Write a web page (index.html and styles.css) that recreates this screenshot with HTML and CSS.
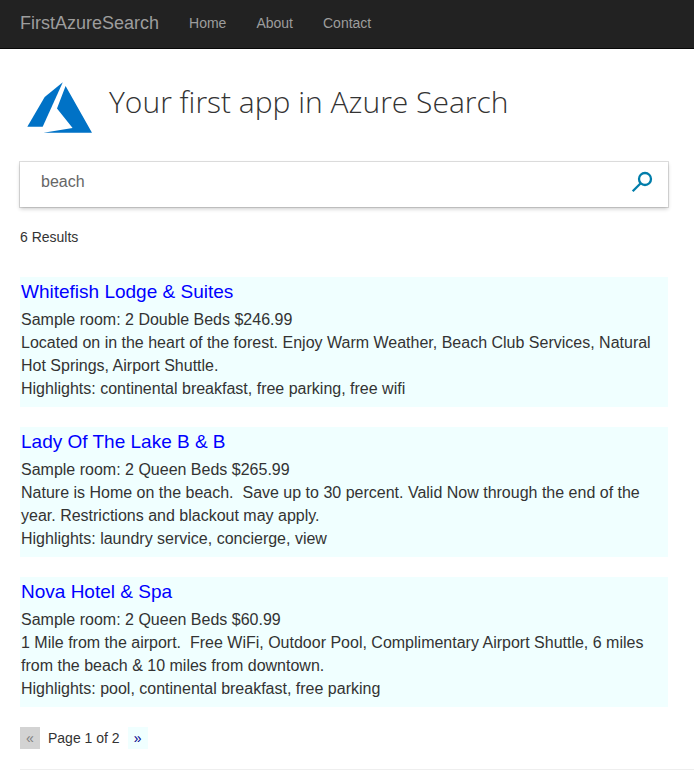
FILE: index.html
```html
<!DOCTYPE html>
<html lang="en">
<head>
<meta charset="utf-8">
<meta name="viewport" content="width=device-width, initial-scale=1">
<title>FirstAzureSearch</title>
<link rel="stylesheet" href="styles.css">
</head>
<body>
<header class="navbar">
  <a class="brand" href="#">FirstAzureSearch</a>
  <nav class="links">
    <a href="#">Home</a>
    <a href="#">About</a>
    <a href="#">Contact</a>
  </nav>
</header>
<main class="page">
  <div class="content">
    <div class="masthead">
      <svg class="logo" viewBox="0 0 66 52" aria-hidden="true">
        <path d="M35.800 0.300 17.700 15 0.300 44.700h15.400z"/>
        <path d="M38.600 4 30 26.500 45.600 46 16.500 50.700h48.500z"/>
      </svg>
      <h1 class="title">Your first app in Azure Search</h1>
    </div>
    <form class="search">
      <input class="search-input" type="text" value="beach" aria-label="Search text">
      <button class="search-button" type="button" aria-label="Search">
        <svg class="search-icon" viewBox="0 0 20 20" aria-hidden="true">
          <circle cx="13" cy="7" r="6"/>
          <path d="M8.700 11.300 0.700 19.300"/>
        </svg>
      </button>
    </form>
    <p class="count">6 Results</p>
    <section class="results">
      <article class="result">
        <h2 class="name">Whitefish Lodge &amp; Suites</h2>
        <p>Sample room: 2 Double Beds $246.99</p>
        <p>Located on in the heart of the forest. Enjoy Warm Weather, Beach Club Services, Natural Hot Springs, Airport Shuttle.</p>
        <p>Highlights: continental breakfast, free parking, free wifi</p>
      </article>
      <article class="result">
        <h2 class="name">Lady Of The Lake B &amp; B</h2>
        <p>Sample room: 2 Queen Beds $265.99</p>
        <p>Nature is Home on the beach.&nbsp; Save up to 30 percent. Valid Now through the end of the year. Restrictions and blackout may apply.</p>
        <p>Highlights: laundry service, concierge, view</p>
      </article>
      <article class="result">
        <h2 class="name">Nova Hotel &amp; Spa</h2>
        <p>Sample room: 2 Queen Beds $60.99</p>
        <p>1 Mile from the airport.&nbsp; Free WiFi, Outdoor Pool, Complimentary Airport Shuttle, 6 miles from the beach &amp; 10 miles from downtown.</p>
        <p>Highlights: pool, continental breakfast, free parking</p>
      </article>
    </section>
    <nav class="pager" aria-label="Pages">
      <button class="page-button" type="button" disabled aria-label="Previous page">«</button>
      <span>Page 1 of 2</span>
      <button class="page-button" type="button" aria-label="Next page">»</button>
    </nav>
  </div>
  <hr class="rule">
</main>
</body>
</html>
```
FILE: styles.css
```css
* {
  box-sizing: border-box;
}

body {
  margin: 0;
  background: #fff;
  color: #333;
  font: 14px/20px "Liberation Sans", Arial, sans-serif;
}

h1, h2, p {
  margin: 0;
}

.navbar {
  display: flex;
  align-items: center;
  gap: 30px;
  padding: 13px 20px 15px;
  background: #222;
  border-bottom: 1px solid #080808;
}

.navbar a {
  color: #9d9d9d;
  text-decoration: none;
}

.navbar .brand {
  font-size: 18px;
}

.links {
  display: flex;
  gap: 30px;
}

.page {
  padding-left: 20px;
}

.content {
  padding-right: 26px;
}

.masthead {
  display: flex;
  align-items: flex-start;
  gap: 16px;
  padding: 33px 0 28px 7px;
}

.logo {
  width: 66px;
  height: 52px;
  fill: #0072c6;
}

.title {
  font: 300 30px/40px "Open Sans", "Noto Sans", sans-serif;
}

.search {
  display: flex;
  height: 45px;
  background: #fff;
  box-shadow: 0 0 0 1px rgba(0, 0, 0, .12), 0 2px 4px rgba(0, 0, 0, .2);
}

.search-input {
  flex: 1;
  min-width: 0;
  padding: 0 0 6px 21px;
  border: 0;
  outline: 0;
  background: none;
  color: #666;
  font: 16px/20px "Liberation Sans", Arial, sans-serif;
}

.search-button {
  display: flex;
  padding: 10px 16px;
  border: 0;
  background: none;
}

.search-icon {
  width: 20px;
  height: 20px;
  overflow: visible;
  fill: none;
  stroke: #007daa;
  stroke-width: 2.3;
}

.count {
  padding: 20px 0 30px;
}

.results {
  display: flex;
  flex-direction: column;
  gap: 20px;
}

.result {
  padding: 1px 1px 7px;
  background: #f0ffff;
  font-size: 16px;
  line-height: 23px;
}

.name {
  padding-bottom: 2px;
  color: #00f;
  font-size: 19px;
  font-weight: 400;
  line-height: 28px;
}

.pager {
  display: flex;
  align-items: center;
  gap: 8px;
  padding: 20px 0;
}

.page-button {
  width: 20px;
  height: 22px;
  padding: 0;
  border: 0;
  background: #f0ffff;
  color: #00008b;
  font: 14px/20px "Liberation Sans", Arial, sans-serif;
}

.page-button:disabled {
  background: #d3d3d3;
  color: #808080;
}

.rule {
  margin: 0;
  border: 0;
  border-top: 1px solid #eee;
}
```
